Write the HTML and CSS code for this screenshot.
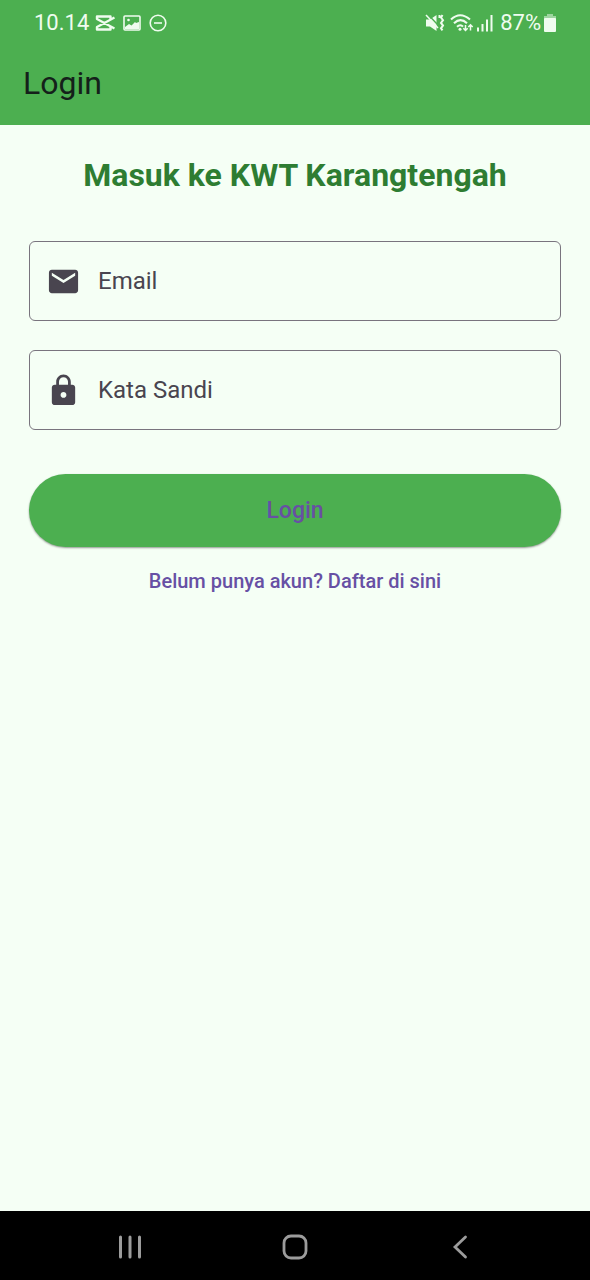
FILE: index.html
```html
<!DOCTYPE html>
<html lang="id">
<head>
<meta charset="utf-8">
<meta name="viewport" content="width=device-width, initial-scale=1">
<title>Login</title>
<link rel="stylesheet" href="styles.css">
</head>
<body>
<div class="screen">
  <header class="top">
    <div class="status">
      <span class="clock">10.14</span>
      <svg class="st-cut" width="20" height="16" viewBox="0 0 20 16" fill="none" stroke="currentColor" stroke-width="2.400" stroke-linejoin="round" aria-hidden="true"><path d="M19.500 2.500 2 12v2.500h13.500V12M19.500 13.500 2 4V1.500h13.500V4"/></svg>
      <svg class="st-image" width="18" height="16" viewBox="0 0 18 16" aria-hidden="true"><rect x="1" y="1" width="16" height="14" rx="1" fill="none" stroke="currentColor" stroke-width="1.600"/><circle cx="5.500" cy="5" r="1.300" fill="currentColor"/><path d="M2 12l4-3 2.500 1.500L12 7l1 1 3-1v7H2z" fill="currentColor"/></svg>
      <svg class="st-dnd" width="18" height="18" viewBox="0 0 18 18" fill="none" stroke="currentColor" stroke-width="1.600" aria-hidden="true"><circle cx="9" cy="9" r="7.800"/><path d="M5 9h8"/></svg>
      <span class="grow"></span>
      <svg class="st-mute" width="20" height="20" viewBox="0 0 20 20" aria-hidden="true"><path d="M1 6.500h4L11.500 2v16L5 13.500H1z" fill="currentColor"/><path d="M2.500 1l10 10.500" stroke="#4caf50" stroke-width="1.400"/><path d="M1 2l12 13" stroke="currentColor" stroke-width="1.500"/><path d="M14.500 2v3M17.500 2l-1.500 2.500 2 2.700-2 2.700 2 2.700-2 2.700 1.500 2" fill="none" stroke="currentColor" stroke-width="2"/></svg>
      <svg class="st-wifi" width="24" height="20" viewBox="0 0 24 20" fill="none" stroke="currentColor" stroke-width="2.100" aria-hidden="true"><path d="M1 6.500q9-8.500 19 0M4 10.200q6.500-6 13 0M7 13.700q3.500-3 6 0"/><circle cx="10" cy="16.300" r="1.500" fill="currentColor" stroke="none"/><path d="M15.500 12v5.500M13.300 15.300l2.200 2.200 2.200-2.200M20.500 17.500V12M18.300 14l2.200-2.200 2.200 2.200" stroke-width="1.500"/></svg>
      <svg class="st-signal" width="17" height="18" viewBox="0 0 17 18" stroke="currentColor" stroke-width="2" aria-hidden="true"><path d="M2 17.500v-4M6.500 17.500V10M11 17.500V5.500M15.500 17.500V1"/></svg>
      <span class="percent">87%</span>
      <svg class="st-battery" width="12" height="18" viewBox="0 0 12 18" fill="currentColor" aria-hidden="true"><path d="M3 0h6v2h3v3H0V2h3z" opacity=".5"/><rect y="4" width="12" height="14" rx="1"/></svg>
    </div>
    <h1 class="title">Login</h1>
  </header>
  <main class="content">
    <h2 class="heading">Masuk ke KWT Karangtengah</h2>
    <form class="form">
      <div class="field">
        <svg class="field-icon" viewBox="0 0 24 24" fill="currentColor" aria-hidden="true"><path d="M20 4H4c-1.100 0-1.990.9-1.990 2L2 18c0 1.100.9 2 2 2h16c1.100 0 2-.9 2-2V6c0-1.100-.9-2-2-2zm0 4l-8 5-8-5V6l8 5 8-5v2z"/></svg>
        <label class="label" for="email">Email</label>
        <input class="input" id="email" type="email">
      </div>
      <div class="field">
        <svg class="field-icon" viewBox="0 0 24 24" fill="currentColor" aria-hidden="true"><path d="M18 8h-1V6c0-2.760-2.240-5-5-5S7 3.240 7 6v2H6c-1.100 0-2 .9-2 2v10c0 1.100.9 2 2 2h12c1.100 0 2-.9 2-2V10c0-1.100-.9-2-2-2zm-6 9c-1.100 0-2-.9-2-2s.9-2 2-2 2 .9 2 2-.9 2-2 2zm3.100-9H8.900V6c0-1.710 1.390-3.100 3.100-3.100 1.710 0 3.100 1.390 3.100 3.100v2z"/></svg>
        <label class="label" for="sandi">Kata Sandi</label>
        <input class="input" id="sandi" type="password">
      </div>
      <button class="submit" type="submit">Login</button>
    </form>
    <a class="register" href="#">Belum punya akun? Daftar di sini</a>
  </main>
  <nav class="navbar">
    <button class="nav" type="button" aria-label="Aplikasi terbaru"><svg width="28" height="28" viewBox="0 0 28 28" fill="none" stroke="currentColor" stroke-width="3" stroke-linecap="round" aria-hidden="true"><path d="M4.500 4v20M14 4v20M23.500 4v20"/></svg></button>
    <button class="nav" type="button" aria-label="Beranda"><svg width="28" height="28" viewBox="0 0 28 28" fill="none" stroke="currentColor" stroke-width="2.800" aria-hidden="true"><rect x="3" y="3" width="22" height="22" rx="7"/></svg></button>
    <button class="nav" type="button" aria-label="Kembali"><svg width="28" height="28" viewBox="0 0 28 28" fill="none" stroke="currentColor" stroke-width="2.800" stroke-linecap="round" aria-hidden="true"><path d="M19.500 4 9 14 19.500 24"/></svg></button>
  </nav>
</div>
</body>
</html>
```
FILE: styles.css
```css
* { box-sizing: border-box; }
body {
  margin: 0;
  background: #f5fff5;
  font-family: Roboto, "Noto Sans", sans-serif;
}
.screen {
  min-height: 100vh;
  display: flex;
  flex-direction: column;
}
.top { background: #4caf50; }
.status {
  display: flex;
  align-items: center;
  height: 45px;
  padding: 0 34px;
  color: #effcef;
}
.status svg { flex: none; }
.clock, .percent { font-size: 22px; line-height: 28px; }
.st-cut { margin-left: 6px; }
.st-image { margin-left: 8px; }
.st-dnd { margin-left: 8px; }
.grow { flex: 1; }
.st-wifi { margin-left: 5px; }
.st-signal { margin-left: 2px; }
.percent { margin-left: 7px; }
.st-battery { margin-left: 3px; }
.title {
  margin: 0;
  padding: 18px 23px 22px;
  color: #14201a;
  font-size: 32px;
  font-weight: 400;
  line-height: 40px;
}
.content {
  flex: 1;
  display: flex;
  flex-direction: column;
  padding: 30px 29px;
}
.heading {
  margin: 0 0 46px;
  color: #2e7d32;
  font-size: 32px;
  font-weight: 700;
  line-height: 40px;
  text-align: center;
}
.form { display: flex; flex-direction: column; }
.field {
  display: flex;
  align-items: center;
  height: 80px;
  margin-bottom: 29px;
  padding: 0 16px;
  border: 1px solid #79747e;
  border-radius: 6px;
  color: #49454f;
}
.field:focus-within { border-color: #6750a4; }
.field-icon { flex: none; width: 35px; height: 35px; }
.label {
  margin-left: 17px;
  font-size: 24px;
  line-height: 32px;
  white-space: nowrap;
}
.input {
  flex: 1;
  min-width: 0;
  height: 48px;
  padding: 0 12px;
  border: 0;
  outline: 0;
  background: transparent;
  color: inherit;
  font: inherit;
  font-size: 24px;
}
.submit {
  height: 73px;
  margin-top: 15px;
  border: 0;
  border-radius: 37px;
  background: #4caf50;
  box-shadow: 0 1px 2px rgba(0, 0, 0, .4);
  color: #6750a4;
  font-family: inherit;
  font-size: 23px;
  font-weight: 500;
  line-height: 28px;
}
.register {
  align-self: center;
  margin-top: 20px;
  color: #6750a4;
  font-size: 20px;
  font-weight: 500;
  line-height: 28px;
  text-decoration: none;
}
.navbar {
  display: flex;
  justify-content: space-between;
  height: 69px;
  padding: 2px 82px 0;
  background: #000;
}
.nav {
  display: flex;
  align-items: center;
  justify-content: center;
  width: 96px;
  padding: 0;
  border: 0;
  background: transparent;
  color: #9c9c9c;
}
```
